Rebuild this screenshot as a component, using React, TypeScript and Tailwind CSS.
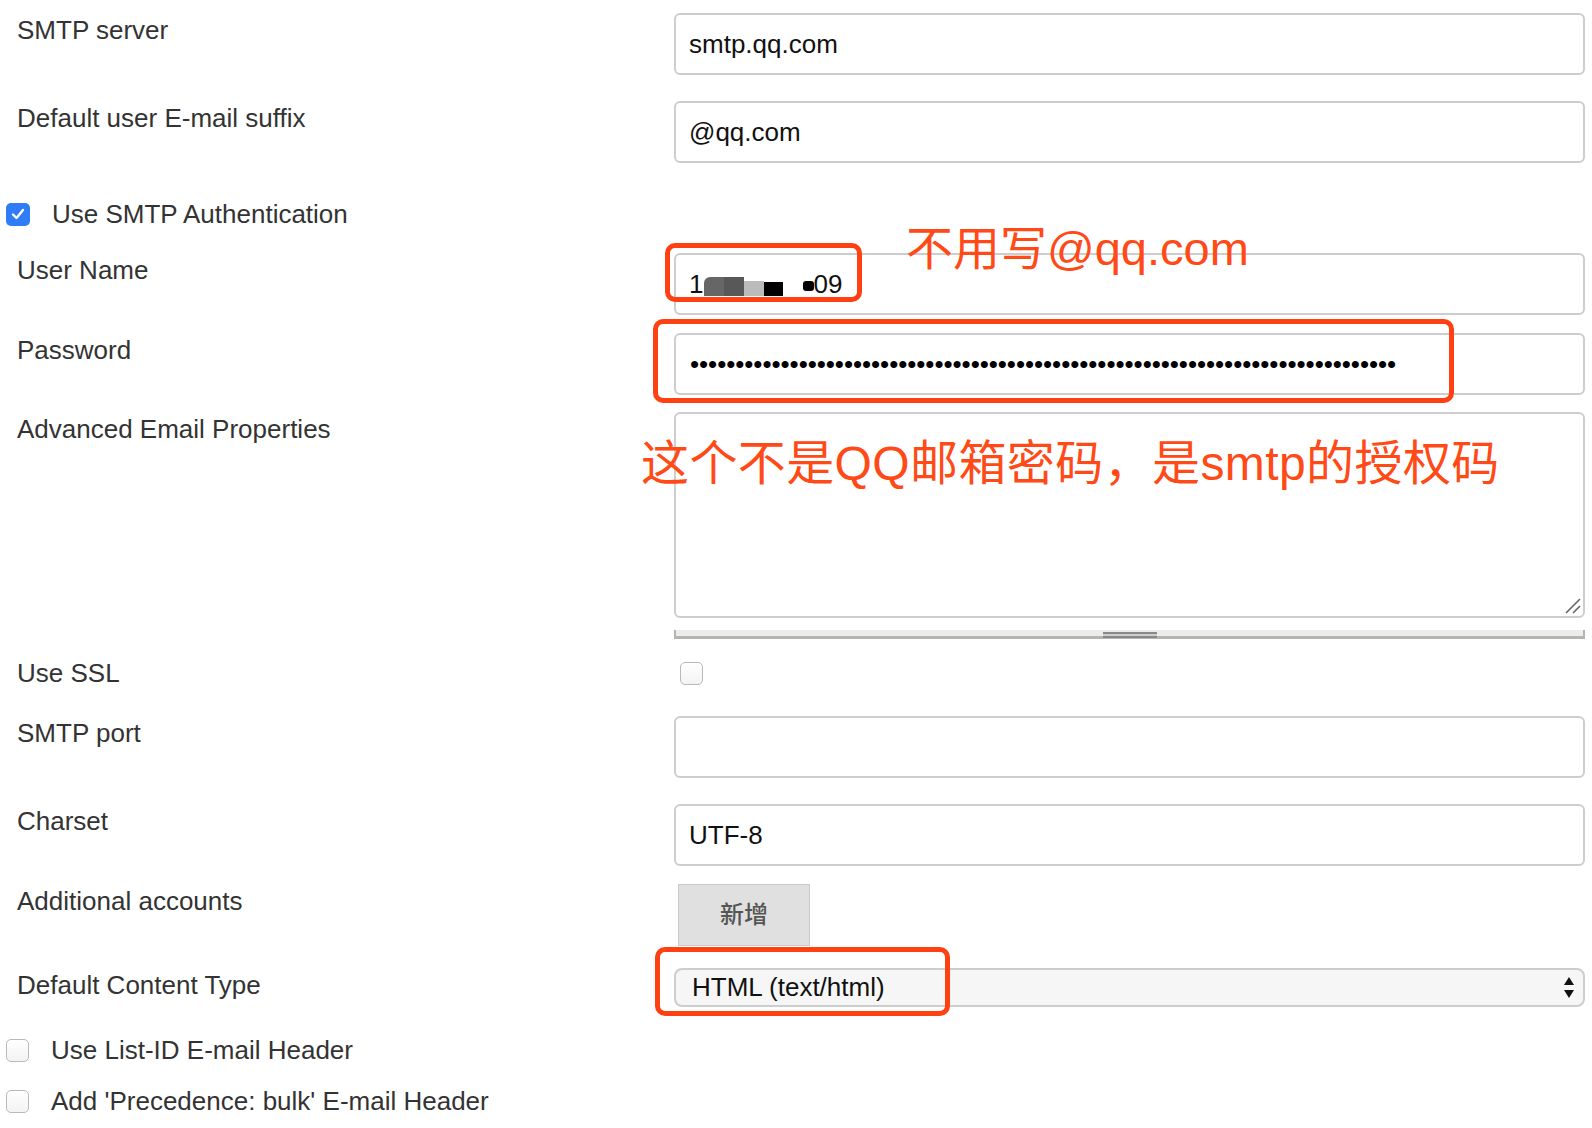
const FONT = "font-['Liberation_Sans','Noto_Sans_CJK_SC',sans-serif]";

function Label({ children }: { children: React.ReactNode }) {
  return <div className="pl-[17px] text-[26px] leading-[34px] text-[#333]">{children}</div>;
}

function Box({ children }: { children?: React.ReactNode }) {
  return (
    <div className="flex h-[62px] items-center rounded-[6px] border-2 border-[#cdcdcd] bg-white pl-[13px] text-[26px] text-[#111]">
      {children}
    </div>
  );
}

function Check({ checked = false }: { checked?: boolean }) {
  if (checked) {
    return (
      <span className="flex h-[23px] w-[24px] items-center justify-center rounded-[5px] bg-[#2f7cf6]">
        <svg width="14" height="12" viewBox="0 0 14 12" fill="none">
          <path d="M2 6.5 L5.5 10 L12 2" stroke="white" strokeWidth="2.4" strokeLinecap="round" strokeLinejoin="round" />
        </svg>
      </span>
    );
  }
  return (
    <span className="block h-[23px] w-[23px] rounded-[5px] border-[1.5px] border-[#b9b9b9] bg-gradient-to-b from-white to-[#f3f3f3]" />
  );
}

function CheckRow({ label, checked, mt }: { label: string; checked?: boolean; mt: string }) {
  return (
    <div className={`flex h-[34px] items-center pl-[6px] ${mt}`}>
      <Check checked={checked} />
      <span className="ml-[22px] text-[26px] leading-[34px] text-[#333]">{label}</span>
    </div>
  );
}

const ROW = "grid grid-cols-[674px_911px]";

export default function App() {
  const dots = "•".repeat(78);
  return (
    <div className={`relative h-[1128px] w-[1592px] overflow-hidden bg-white ${FONT}`}>
      <div className="flex flex-col">
        <div className={`${ROW} mt-[13px]`}>
          <Label>SMTP server</Label>
          <Box>smtp.qq.com</Box>
        </div>
        <div className={`${ROW} mt-[26px]`}>
          <Label>Default user E-mail suffix</Label>
          <Box>@qq.com</Box>
        </div>
        <CheckRow label="Use SMTP Authentication" checked mt="mt-[34px]" />
        <div className={`${ROW} mt-[22px]`}>
          <Label>User Name</Label>
          <Box>
            <span>1</span>
            <span className="ml-[1px] flex items-end self-center pt-[4px]">
              <span className="h-[19px] w-[20px] rounded-tl-[6px] bg-[#666]" />
              <span className="h-[19px] w-[20px] bg-[#585858]" />
              <span className="h-[15px] w-[20px] bg-[#bbb]" />
              <span className="h-[14px] w-[19px] bg-black" />
            </span>
            <span className="ml-[20px] inline-block h-[10px] w-[11px] translate-y-[2px] rounded-[3px] bg-black" />
            <span className="-ml-[1px]">09</span>
          </Box>
        </div>
        <div className={`${ROW} mt-[18px]`}>
          <Label>Password</Label>
          <Box>
            <span className="pl-[1px] text-[26px] tracking-[-0.05px] text-black">{dots}</span>
          </Box>
        </div>
        <div className={`${ROW} mt-[17px]`}>
          <Label>Advanced Email Properties</Label>
          <div className="relative h-[206px] rounded-[6px] border-2 border-[#cdcdcd] bg-white">
            <svg className="absolute bottom-[1px] right-[1px]" width="18" height="18" viewBox="0 0 18 18">
              <path d="M16 2 L2 16 M16 9 L9 16" stroke="#666" strokeWidth="1.6" />
            </svg>
          </div>
        </div>
        <div className={`${ROW} mt-[12px]`}>
          <div />
          <div className="flex h-[9px] justify-center border-x-2 border-b-[3px] border-[#b5b5ad] bg-[#ececec]">
            <div className="mt-[2px] h-[6px] w-[54px] border-y-2 border-[#888] bg-[#cfcfcf]" />
          </div>
        </div>
        <div className={`${ROW} mt-[17px]`}>
          <Label>Use SSL</Label>
          <div className="flex h-[34px] items-center pl-[6px]">
            <Check />
          </div>
        </div>
        <div className={`${ROW} mt-[26px]`}>
          <Label>SMTP port</Label>
          <Box />
        </div>
        <div className={`${ROW} mt-[26px]`}>
          <Label>Charset</Label>
          <Box>UTF-8</Box>
        </div>
        <div className={`${ROW} mt-[18px]`}>
          <Label>Additional accounts</Label>
          <div className="pl-[4px]">
            <div className="flex h-[62px] w-[132px] items-center justify-center border-[1.5px] border-[#c9c9c9] bg-[#e0e0e0] text-[24px] font-medium text-[#555]">
              新增
            </div>
          </div>
        </div>
        <div className={`${ROW} mt-[22px]`}>
          <Label>Default Content Type</Label>
          <div className="flex h-[39px] items-center justify-between rounded-[8px] border-2 border-[#cdcdcd] bg-[#f6f6f6] pl-[16px] pr-[8px] text-[26px] text-[#111]">
            <span>HTML (text/html)</span>
            <svg width="12" height="24" viewBox="0 0 12 24">
              <path d="M6 1 L11 9 L1 9 Z" fill="#111" />
              <path d="M1 14 L11 14 L6 22 Z" fill="#111" />
            </svg>
          </div>
        </div>
        <CheckRow label="Use List-ID E-mail Header" mt="mt-[26px]" />
        <CheckRow label="Add 'Precedence: bulk' E-mail Header" mt="mt-[17px]" />
      </div>

      {/* annotations drawn over the form */}
      <div className="absolute left-[665px] top-[243px] h-[59px] w-[197px] rounded-[10px] border-[5px] border-[#ff4013]" />
      <div className="absolute left-[653px] top-[319px] h-[84px] w-[801px] rounded-[10px] border-[5px] border-[#ff4013]" />
      <div className="absolute left-[655px] top-[947px] h-[69px] w-[295px] rounded-[10px] border-[5px] border-[#ff4013]" />
      <div className="absolute left-[906px] top-[225px] text-[47px] leading-[48px] text-[#ff4a17]">不用写@qq.com</div>
      <div className="absolute left-[641px] top-[440px] text-[48px] leading-[48px] tracking-[0.4px] text-[#ff4a17]">
        这个不是QQ邮箱密码，是smtp的授权码
      </div>
    </div>
  );
}
